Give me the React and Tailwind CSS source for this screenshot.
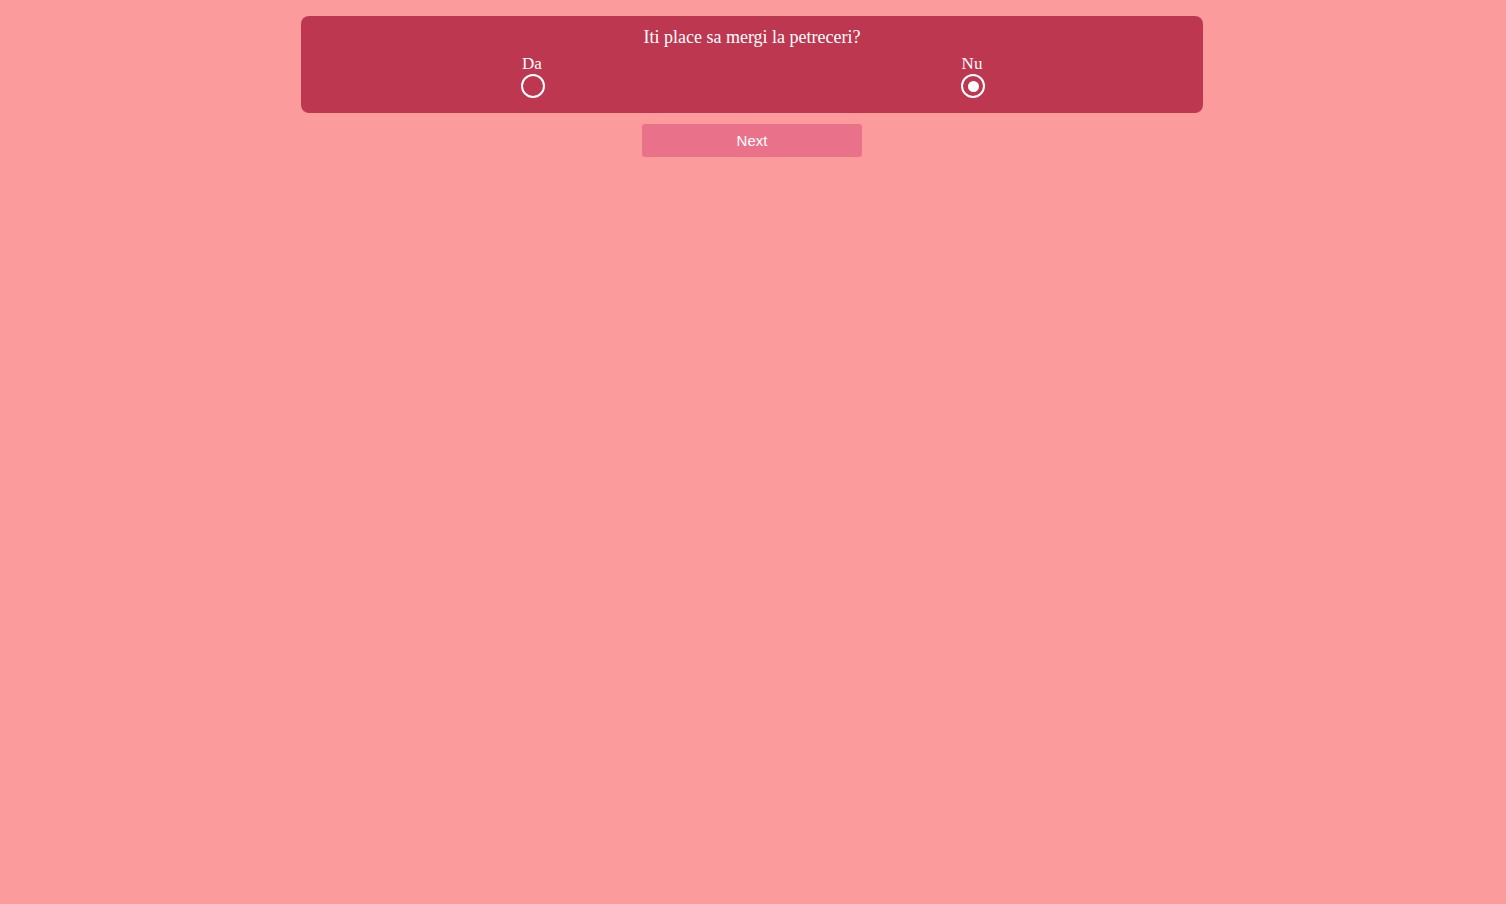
export default function App() {
  const Radio = ({ checked }) => (
    <span className="flex h-[24px] w-[24px] items-center justify-center rounded-full border-2 border-white">
      {checked && <span className="h-[11px] w-[11px] rounded-full bg-white" />}
    </span>
  );
  return (
    <div className="min-h-[904px] w-full bg-[#fc9b9b] pt-[16px] pr-[2px]">
      <div className="mx-auto w-[902px] rounded-[8px] bg-[#be3750] px-[11px] pt-[13px] pb-[15px] text-white" style={{ fontFamily: '"Liberation Serif", serif' }}>
        <div className="text-center text-[18px] leading-[20px]" style={{ marginTop: -2 }}>Iti place sa mergi la petreceri?</div>
        <div className="mt-[7px] grid grid-cols-2">
          <label className="flex flex-col items-center">
            <span className="text-[17px] leading-[20px]">Da</span>
            <span className="ml-[2px]"><Radio checked={false} /></span>
          </label>
          <label className="flex flex-col items-center">
            <span className="text-[17px] leading-[20px]">Nu</span>
            <span className="ml-[2px]"><Radio checked={true} /></span>
          </label>
        </div>
      </div>
      <div className="mt-[11px] flex justify-center">
        <button className="h-[33px] w-[220px] rounded-[3px] bg-[#e97189] pt-[2px] text-[15px] text-white" style={{ fontFamily: '"Liberation Sans", Arial, sans-serif' }}>Next</button>
      </div>
    </div>
  );
}
